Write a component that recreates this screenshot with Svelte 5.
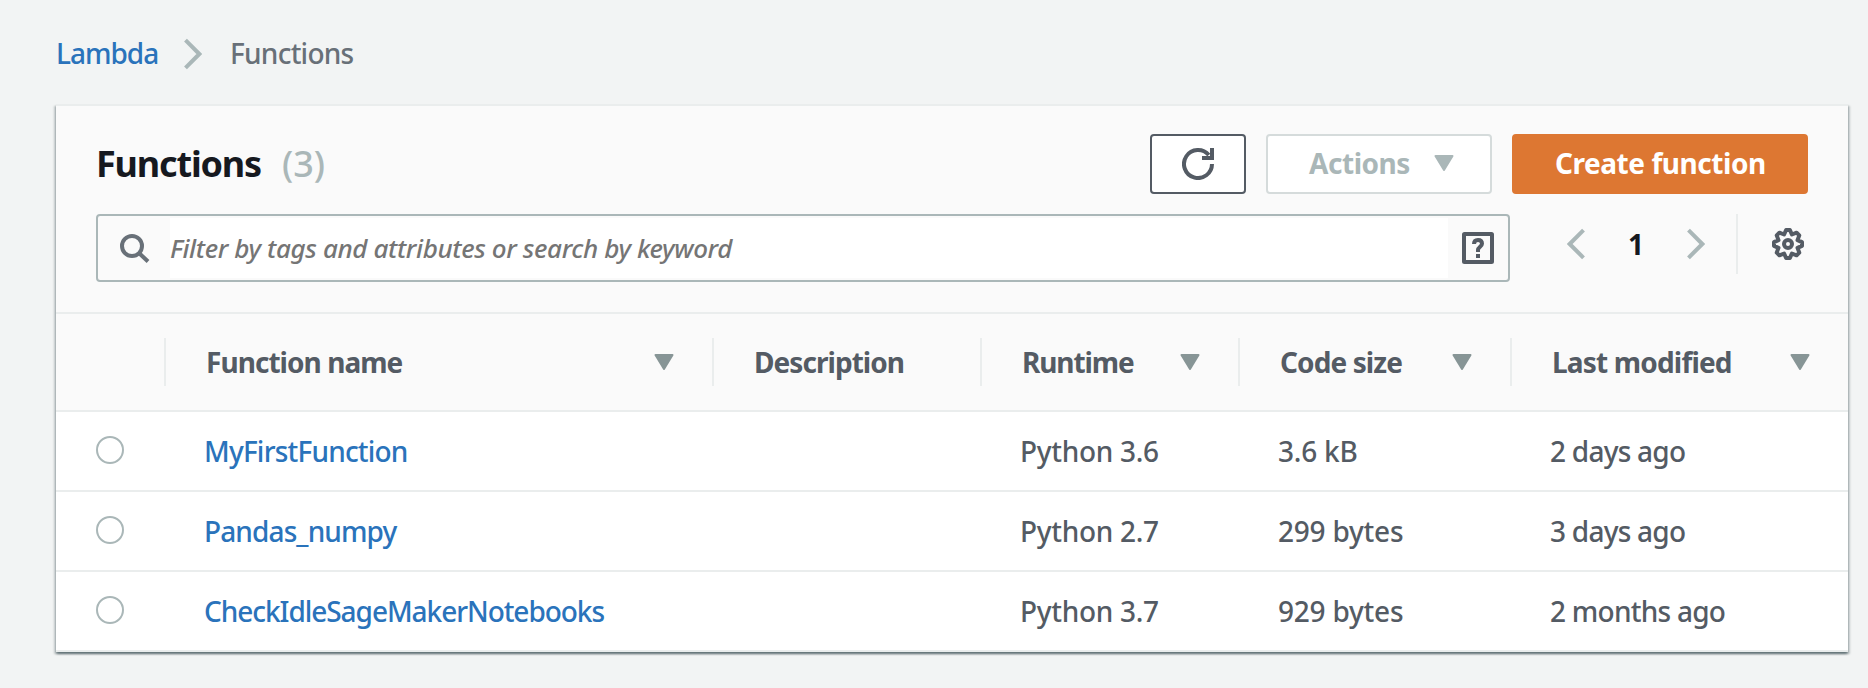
<script>
  const columns = [
    { key: 'name', label: 'Function name', sortable: true, track: -0.95 },
    { key: 'description', label: 'Description', sortable: false, track: -0.95 },
    { key: 'runtime', label: 'Runtime', sortable: true, track: -1.1 },
    { key: 'size', label: 'Code size', sortable: true, track: -0.9 },
    { key: 'modified', label: 'Last modified', sortable: true, track: -0.82 }
  ];

  const functions = [
    { name: 'MyFirstFunction', track: -0.8, description: '', runtime: 'Python 3.6', size: '3.6 kB', modified: '2 days ago' },
    { name: 'Pandas_numpy', track: -0.88, description: '', runtime: 'Python 2.7', size: '299 bytes', modified: '3 days ago' },
    { name: 'CheckIdleSageMakerNotebooks', track: -1.05, description: '', runtime: 'Python 3.7', size: '929 bytes', modified: '2 months ago' }
  ];

  let selected = $state('');
  let filter = $state('');
</script>

{#snippet triangle()}
  <svg class="triangle" viewBox="0 0 20 16" aria-hidden="true">
    <path d="M1.5 1h17L10 15z" fill="currentColor" stroke="currentColor" stroke-width="2" stroke-linejoin="round" />
  </svg>
{/snippet}

{#snippet chevron(direction)}
  <svg class="chevron" viewBox="0 0 18 32" aria-hidden="true">
    <path
      d={direction === 'left' ? 'M16.5 2.2 2.7 16l13.8 13.8' : 'M1.5 2.2 15.3 16 1.5 29.8'}
      fill="none"
      stroke="currentColor"
      stroke-width="4"
    />
  </svg>
{/snippet}

<div class="page">
  <nav class="breadcrumb">
    <a class="crumb-link" href="#lambda">Lambda</a>
    {@render chevron('right')}
    <span class="crumb-current">Functions</span>
  </nav>

  <section class="panel">
    <header class="panel-header">
      <div class="title-row">
        <h1>Functions</h1>
        <span class="count">({functions.length})</span>
        <div class="actions">
          <button class="btn refresh" aria-label="Refresh">
            <svg viewBox="0 0 16 16" width="32" height="32" fill="none" stroke="currentColor" stroke-width="2">
              <path d="M10 5h5V0" />
              <path d="M15 8a7 7 0 1 1-1.6-4.45" />
            </svg>
          </button>
          <button class="btn disabled" disabled><span>Actions</span>{@render triangle()}</button>
          <button class="btn primary">Create function</button>
        </div>
      </div>

      <div class="filter-row">
        <div class="search">
          <span class="search-icon">
            <svg viewBox="0 0 32 32" width="32" height="32" fill="none" stroke="currentColor" stroke-width="4">
              <circle cx="14" cy="14" r="10" />
              <path d="M21 21 30 29.5" />
            </svg>
          </span>
          <input bind:value={filter} placeholder="Filter by tags and attributes or search by keyword" />
          <button class="help" aria-label="Help">
            <svg viewBox="0 0 32 32" width="32" height="32">
              <rect x="2" y="2" width="28" height="28" rx="0.5" fill="none" stroke="currentColor" stroke-width="4" />
              <path d="M12 12c0-2.8 1.6-4 4-4s4 1.4 4 3.8c0 2.7-4 3.2-4 6.2v2" fill="none" stroke="currentColor" stroke-width="4" />
              <rect x="14" y="22" width="4" height="4" fill="currentColor" />
            </svg>
          </button>
        </div>

        <div class="pager">
          {@render chevron('left')}
          <span class="page-number">1</span>
          {@render chevron('right')}
          <button class="settings" aria-label="Settings">
            <svg viewBox="0 0 32 32" width="32" height="32" fill="none" stroke="currentColor" stroke-width="4">
              <circle cx="16" cy="16" r="4" />
              <path
                stroke-linejoin="round"
                d="M17.9 2 19.9 6.500 24.600 4.700 27.300 7.400 25.500 12.100 30 14.100V17.900L25.500 19.900 27.300 24.600 24.600 27.300 19.900 25.500 17.900 30H14.100L12.100 25.500 7.400 27.300 4.700 24.600 6.500 19.900 2 17.900V14.100L6.500 12.100 4.700 7.400 7.400 4.700 12.100 6.500 14.100 2z"
              />
            </svg>
          </button>
        </div>
      </div>
    </header>

    <div class="table" role="table">
      <div class="row head" role="row">
        <span class="select"></span>
        {#each columns as column}
          <span class="th" role="columnheader">
            <span style:letter-spacing="{column.track}px">{column.label}</span>
            {#if column.sortable}{@render triangle()}{/if}
          </span>
        {/each}
      </div>
      {#each functions as fn}
        <div class="row" role="row">
          <span class="select"><input type="radio" name="fn" value={fn.name} bind:group={selected} aria-label={fn.name} /></span>
          <span class="td"><a href="#{fn.name}" style:letter-spacing="{fn.track}px">{fn.name}</a></span>
          <span class="td">{fn.description}</span>
          <span class="td runtime">{fn.runtime}</span>
          <span class="td size">{fn.size}</span>
          <span class="td modified">{fn.modified}</span>
        </div>
      {/each}
    </div>
  </section>
</div>

<style>
  :global(body) {
    background: #f2f4f4;
  }
  .page {
    box-sizing: border-box;
    height: 688px;
    overflow: hidden;
    padding: 34px 20px 0 56px;
    font: 500 28px/40px "Noto Sans", sans-serif;
    color: #545b64;
    background: #f2f4f4;
  }
  svg {
    display: block;
    flex: none;
  }
  button {
    font: inherit;
    color: inherit;
    cursor: pointer;
  }
  a {
    color: #2a73bb;
    text-decoration: none;
  }

  .breadcrumb {
    display: flex;
    align-items: center;
    height: 40px;
    margin-bottom: 30px;
  }
  .crumb-link {
    width: 128px;
    padding-bottom: 2px;
    letter-spacing: -1px;
  }
  .crumb-current {
    margin-left: 28px;
    padding-bottom: 2px;
    color: #687078;
    letter-spacing: -0.75px;
  }
  .chevron {
    width: 18px;
    height: 32px;
    color: #aab7b8;
  }

  .panel {
    border-top: 2px solid #eaeded;
    background: #fff;
    box-shadow:
      0 2px 2px 0 rgba(0, 28, 36, 0.4),
      2px 2px 2px 0 rgba(0, 28, 36, 0.18),
      -2px 2px 2px 0 rgba(0, 28, 36, 0.18);
  }
  .panel-header {
    box-sizing: border-box;
    height: 208px;
    padding: 28px 40px 0;
    background: #fafafa;
    border-bottom: 2px solid #eaeded;
  }
  .title-row {
    display: flex;
    align-items: center;
    height: 60px;
  }
  h1 {
    margin: 0;
    font-size: 36px;
    font-weight: 700;
    letter-spacing: -1.17px;
    color: #16191f;
  }
  .count {
    margin-left: 21px;
    font-size: 36px;
    color: #aab7b8;
  }
  .actions {
    display: flex;
    gap: 20px;
    margin-left: auto;
  }
  .btn {
    box-sizing: border-box;
    display: flex;
    align-items: center;
    justify-content: space-between;
    height: 60px;
    padding: 0 40px 2px;
    border: 2px solid #545b64;
    border-radius: 4px;
    background: #fff;
    font-weight: 700;
    letter-spacing: -0.45px;
  }
  .refresh {
    justify-content: center;
    width: 96px;
    padding: 0;
  }
  .disabled {
    width: 226px;
    padding: 0 36px 2px 41px;
    border-color: #d5dbdb;
    color: #aab7b8;
  }
  .disabled .triangle {
    color: #aab7b8;
  }
  .primary {
    width: 296px;
    padding-left: 41px;
    border-color: #dd7732;
    background: #dd7732;
    color: #fff;
    white-space: nowrap;
  }
  .triangle {
    width: 20px;
    height: 16px;
    color: #879596;
  }

  .filter-row {
    display: flex;
    align-items: flex-start;
    justify-content: space-between;
    margin-top: 20px;
  }
  .search {
    box-sizing: border-box;
    display: flex;
    align-items: center;
    width: 1414px;
    height: 68px;
    padding: 2px 0;
    border: 2px solid #aab7b8;
    border-radius: 4px;
  }
  .search-icon {
    width: 52px;
    padding-left: 20px;
    color: #687078;
  }
  .search input {
    flex: 1;
    align-self: stretch;
    min-width: 0;
    padding: 0;
    border: 0;
    outline: 0;
    background: #fff;
    font: italic 500 26px "Noto Sans", sans-serif;
    letter-spacing: -0.37px;
    color: #545b64;
  }
  .search input::placeholder {
    color: #757575;
    opacity: 1;
  }
  .help {
    padding: 0 14px;
    border: 0;
    background: none;
  }
  .pager {
    display: flex;
    align-items: center;
    height: 60px;
  }
  .page-number {
    width: 102px;
    text-align: center;
    font-weight: 700;
    color: #16191f;
  }
  .settings {
    display: flex;
    align-items: center;
    height: 60px;
    margin-left: 31px;
    padding: 0 4px 0 34px;
    border: 0;
    border-left: 2px solid #eaeded;
    background: none;
  }

  .row {
    box-sizing: border-box;
    display: grid;
    grid-template-columns: 108px 548px 268px 258px 272px 338px;
    align-items: center;
    height: 80px;
    border-bottom: 2px solid #eaeded;
  }
  .head {
    height: 98px;
    background: #fafafa;
    font-weight: 700;
  }
  .th {
    box-sizing: border-box;
    display: flex;
    align-items: center;
    justify-content: space-between;
    height: 48px;
    padding: 0 38px 1px 40px;
    border-left: 2px solid #eaeded;
    white-space: nowrap;
  }
  .td {
    padding-left: 40px;
    white-space: nowrap;
  }
  .runtime {
    letter-spacing: -0.3px;
  }
  .size {
    letter-spacing: -0.22px;
  }
  .modified {
    letter-spacing: -0.75px;
  }
  .select {
    padding-left: 40px;
  }
  .select input {
    appearance: none;
    box-sizing: border-box;
    display: block;
    width: 28px;
    height: 28px;
    margin: 0 0 2px;
    border: 2px solid #aab7b8;
    border-radius: 50%;
    background: #fff;
  }
  .select input:checked {
    border: 8px solid #2a73bb;
  }
</style>
